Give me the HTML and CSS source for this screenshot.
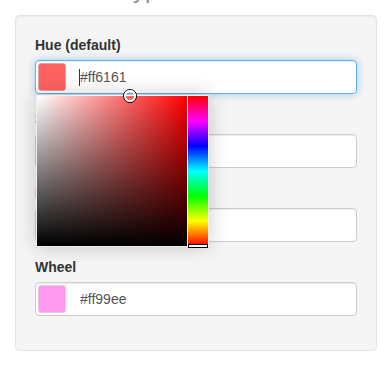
FILE: index.html
```html
<!DOCTYPE html>
<html>
<head>
<meta charset="utf-8">
<link rel="stylesheet" href="styles.css">
</head>
<body>
<h3 class="section-title">Control Types</h3>
<div class="well">
  <div class="form-group">
    <label class="control-label">Hue (default)</label>
    <div class="minicolors">
      <div class="form-control is-focused">
        <span class="swatch swatch-hue"></span>
        <span class="value"><span class="text-caret"></span>#ff6161</span>
      </div>
      <div class="mc-panel">
        <div class="mc-grid">
          <span class="mc-grid-picker"><span class="mc-grid-picker-inner"></span></span>
        </div>
        <div class="mc-slider">
          <span class="mc-slider-picker"></span>
        </div>
      </div>
    </div>
  </div>
  <div class="form-group">
    <label class="control-label">Saturation</label>
    <div class="minicolors">
      <div class="form-control">
        <span class="swatch swatch-sat"></span>
        <span class="value">#0088cc</span>
      </div>
    </div>
  </div>
  <div class="form-group">
    <label class="control-label">Brightness</label>
    <div class="minicolors">
      <div class="form-control">
        <span class="swatch swatch-bri"></span>
        <span class="value">#00ffff</span>
      </div>
    </div>
  </div>
  <div class="form-group">
    <label class="control-label">Wheel</label>
    <div class="minicolors">
      <div class="form-control">
        <span class="swatch swatch-wheel"></span>
        <span class="value">#ff99ee</span>
      </div>
    </div>
  </div>
</div>
</body>
</html>
```
FILE: styles.css
```css
html, body {
  margin: 0;
  padding: 0;
  background: #fff;
  font-family: "Liberation Sans", Arial, sans-serif;
  font-size: 14px;
  line-height: 20px;
  color: #333;
}

.section-title {
  margin: -23px 0 0 36px;
  height: 26px;
  font-size: 24px;
  line-height: 26px;
  font-weight: 500;
  color: #8a8f96;
}

.well {
  margin: 12px 14px 0 15px;
  padding: 19px;
  background: #f5f5f5;
  border: 1px solid #e3e3e3;
  border-radius: 4px;
  box-shadow: inset 0 1px 1px rgba(0, 0, 0, 0.05);
}

.form-group {
  margin-bottom: 15px;
}

.control-label {
  display: block;
  font-weight: bold;
  line-height: 20px;
  margin-bottom: 5px;
  color: #333;
}

.minicolors {
  position: relative;
}

.form-control {
  display: flex;
  align-items: center;
  box-sizing: border-box;
  height: 34px;
  padding: 0 12px 0 2px;
  background: #fff;
  border: 1px solid #ccc;
  border-radius: 4px;
  box-shadow: inset 0 1px 1px rgba(0, 0, 0, 0.075);
  color: #555;
}

.form-control.is-focused {
  border-color: #66afe9;
  box-shadow: inset 0 1px 1px rgba(0, 0, 0, 0.075), 0 0 8px rgba(102, 175, 233, 0.6);
}

.swatch {
  flex: none;
  box-sizing: border-box;
  width: 28px;
  height: 28px;
  border: 1px solid #ccc;
  border-radius: 3px;
  margin-right: 14px;
}

.swatch-hue { background: #ff6161; border-color: #e0a5a5; }
.swatch-sat { background: #0088cc; }
.swatch-bri { background: #00ffff; }
.swatch-wheel { background: #ff99ee; border-color: #e6c8e0; }

.value {
  display: flex;
  align-items: center;
  font-size: 14px;
  color: #555;
}

.text-caret {
  display: inline-block;
  width: 1px;
  height: 17px;
  background: #333;
  margin-left: -1px;
}

.mc-panel {
  position: absolute;
  top: 100%;
  left: 1px;
  margin-top: 1px;
  z-index: 10;
  width: 171px;
  height: 150px;
  background: #fff;
  border: 1px solid #f0f0f0;
  box-shadow: 0 0 20px rgba(0, 0, 0, 0.2);
  display: flex;
  gap: 1px;
}

.mc-grid {
  position: relative;
  width: 150px;
  height: 150px;
  background:
    linear-gradient(to bottom, rgba(0, 0, 0, 0), #000),
    linear-gradient(to right, #fff, rgba(255, 255, 255, 0)),
    #ff0000;
}

.mc-grid-picker {
  position: absolute;
  top: 0;
  left: 93px;
  margin: -7px 0 0 -7px;
  box-sizing: border-box;
  width: 14px;
  height: 14px;
  border: 1px solid #000;
  border-radius: 50%;
}

.mc-grid-picker-inner {
  position: absolute;
  top: 0;
  left: 0;
  box-sizing: border-box;
  width: 12px;
  height: 12px;
  border: 2px solid #fff;
  border-radius: 50%;
}

.mc-slider {
  position: relative;
  width: 20px;
  height: 150px;
  background: linear-gradient(to bottom,
    #ff0000 0%,
    #ff00ff 16.7%,
    #0000ff 33.3%,
    #00ffff 50%,
    #00ff00 66.7%,
    #ffff00 83.3%,
    #ff0000 100%);
}

.mc-slider-picker {
  position: absolute;
  left: 0;
  bottom: -2px;
  box-sizing: border-box;
  width: 20px;
  height: 4px;
  background: #fff;
  border: 1px solid #000;
}
```
